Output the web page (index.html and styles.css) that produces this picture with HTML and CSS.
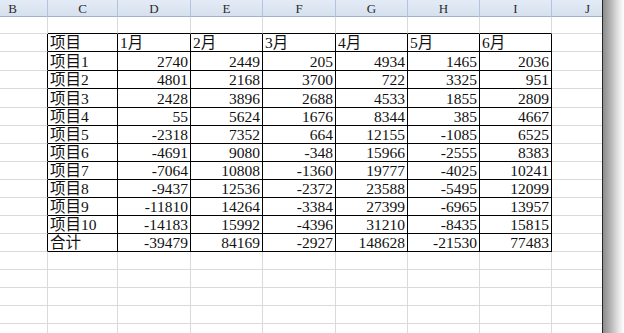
FILE: index.html
```html
<!DOCTYPE html>
<html lang="zh">
<head>
<meta charset="utf-8">
<title>Sheet</title>
<link rel="stylesheet" href="styles.css">
</head>
<body>
<div class="window">
  <div class="viewport">
    <table class="sheet">
      <colgroup>
        <col class="w70"><col class="w70"><col class="w73"><col class="w72"><col class="w73"><col class="w72"><col class="w72"><col class="w72"><col class="w72">
      </colgroup>
      <thead>
        <tr class="hdr"><th>B</th><th>C</th><th>D</th><th>E</th><th>F</th><th>G</th><th>H</th><th>I</th><th>J</th></tr>
      </thead>
      <tbody>
        <tr class="h17"><td></td><td class="top"></td><td class="top"></td><td class="top"></td><td class="top"></td><td class="top"></td><td class="top"></td><td class="top"></td><td></td></tr>
        <tr class="h18"><td class="rb"></td><td class="t">项目</td><td class="t">1月</td><td class="t">2月</td><td class="t">3月</td><td class="t">4月</td><td class="t">5月</td><td class="t">6月</td><td></td></tr>
        <tr class="h19"><td class="rb"></td><td class="t">项目1</td><td class="t n">2740</td><td class="t n">2449</td><td class="t n">205</td><td class="t n">4934</td><td class="t n">1465</td><td class="t n">2036</td><td></td></tr>
        <tr class="h18"><td class="rb"></td><td class="t">项目2</td><td class="t n">4801</td><td class="t n">2168</td><td class="t n">3700</td><td class="t n">722</td><td class="t n">3325</td><td class="t n">951</td><td></td></tr>
        <tr class="h19"><td class="rb"></td><td class="t">项目3</td><td class="t n">2428</td><td class="t n">3896</td><td class="t n">2688</td><td class="t n">4533</td><td class="t n">1855</td><td class="t n">2809</td><td></td></tr>
        <tr class="h18"><td class="rb"></td><td class="t">项目4</td><td class="t n">55</td><td class="t n">5624</td><td class="t n">1676</td><td class="t n">8344</td><td class="t n">385</td><td class="t n">4667</td><td></td></tr>
        <tr class="h18"><td class="rb"></td><td class="t">项目5</td><td class="t n">-2318</td><td class="t n">7352</td><td class="t n">664</td><td class="t n">12155</td><td class="t n">-1085</td><td class="t n">6525</td><td></td></tr>
        <tr class="h18"><td class="rb"></td><td class="t">项目6</td><td class="t n">-4691</td><td class="t n">9080</td><td class="t n">-348</td><td class="t n">15966</td><td class="t n">-2555</td><td class="t n">8383</td><td></td></tr>
        <tr class="h18"><td class="rb"></td><td class="t">项目7</td><td class="t n">-7064</td><td class="t n">10808</td><td class="t n">-1360</td><td class="t n">19777</td><td class="t n">-4025</td><td class="t n">10241</td><td></td></tr>
        <tr class="h18"><td class="rb"></td><td class="t">项目8</td><td class="t n">-9437</td><td class="t n">12536</td><td class="t n">-2372</td><td class="t n">23588</td><td class="t n">-5495</td><td class="t n">12099</td><td></td></tr>
        <tr class="h18"><td class="rb"></td><td class="t">项目9</td><td class="t n">-11810</td><td class="t n">14264</td><td class="t n">-3384</td><td class="t n">27399</td><td class="t n">-6965</td><td class="t n">13957</td><td></td></tr>
        <tr class="h18"><td class="rb"></td><td class="t">项目10</td><td class="t n">-14183</td><td class="t n">15992</td><td class="t n">-4396</td><td class="t n">31210</td><td class="t n">-8435</td><td class="t n">15815</td><td></td></tr>
        <tr class="h18"><td class="rb"></td><td class="t">合计</td><td class="t n">-39479</td><td class="t n">84169</td><td class="t n">-2927</td><td class="t n">148628</td><td class="t n">-21530</td><td class="t n">77483</td><td></td></tr>
        <tr class="h18"><td></td><td></td><td></td><td></td><td></td><td></td><td></td><td></td><td></td></tr>
        <tr class="h18"><td></td><td></td><td></td><td></td><td></td><td></td><td></td><td></td><td></td></tr>
        <tr class="h18"><td></td><td></td><td></td><td></td><td></td><td></td><td></td><td></td><td></td></tr>
        <tr class="h18"><td></td><td></td><td></td><td></td><td></td><td></td><td></td><td></td><td></td></tr>
        <tr class="h18"><td></td><td></td><td></td><td></td><td></td><td></td><td></td><td></td><td></td></tr>
      </tbody>
    </table>
  </div>
  <div class="edge"></div>
  <div class="shadow"></div>
</div>
</body>
</html>
```

FILE: styles.css
```css
html, body {
  margin: 0;
  padding: 0;
  background: #ffffff;
}
body {
  width: 624px;
  height: 333px;
  overflow: hidden;
}
.window {
  display: flex;
  width: 624px;
  height: 333px;
}
.viewport {
  width: 602px;
  height: 333px;
  overflow: hidden;
  flex: none;
}
.edge {
  width: 1px;
  flex: none;
  background: #262626;
}
.shadow {
  flex: 1;
  background: linear-gradient(to right, #8c8c8c 0%, #b4b4b4 35%, #e6e6e6 75%, #ffffff 100%);
}
.sheet {
  table-layout: fixed;
  width: 646px;
  margin-left: -22px;
  border-collapse: separate;
  border-spacing: 0;
}
.w70 { width: 70px; }
.w72 { width: 72px; }
.w73 { width: 73px; }

.hdr th {
  box-sizing: border-box;
  height: 17px;
  padding: 0;
  font-family: "Liberation Serif", serif;
  font-weight: normal;
  font-size: 13px;
  line-height: 15px;
  color: #2b2b2b;
  text-align: center;
  background: linear-gradient(#e3ebf6, #d6e1ee);
  border-right: 1px solid #b3c4da;
  border-bottom: 1px solid #9fb4cc;
}
.sheet td {
  box-sizing: border-box;
  padding: 0 2px;
  border-right: 1px solid #dadada;
  border-bottom: 1px solid #dadada;
  font-family: "Liberation Serif", "Noto Sans CJK SC", serif;
  font-size: 15.5px;
  line-height: 17px;
  color: #111111;
  white-space: nowrap;
  overflow: hidden;
  vertical-align: middle;
}
.h17 td { height: 17px; }
.h18 td { height: 18px; }
.h19 td { height: 19px; }

.sheet td.top { border-bottom-color: #000000; }
.sheet td.rb { border-right-color: #000000; }
.sheet td.t {
  border-right-color: #000000;
  border-bottom-color: #000000;
}
.sheet td.n {
  text-align: right;
  padding-right: 2px;
}
```
